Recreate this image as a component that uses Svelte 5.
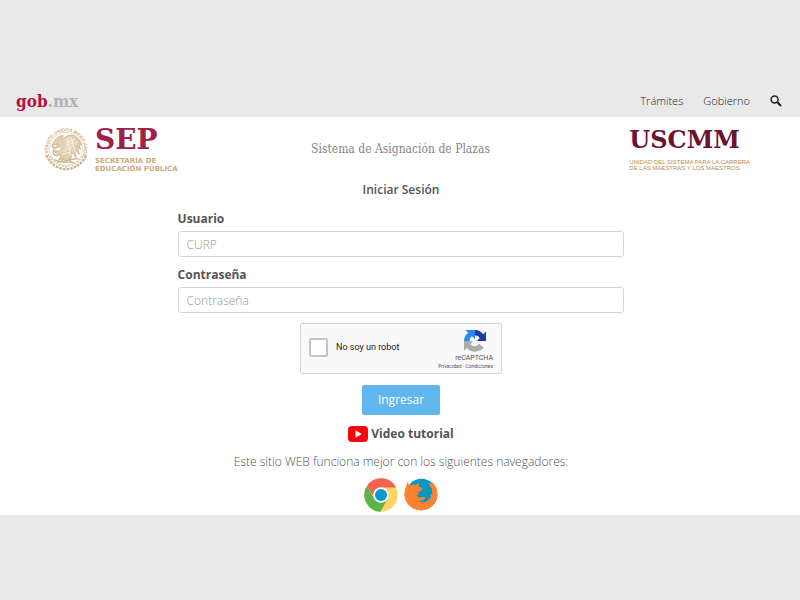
<script>
  let usuario = $state('');
  let contrasena = $state('');
  let humano = $state(false);
</script>

<div class="page">
  <header class="topbar">
    <a class="gob" href="#inicio"><b>gob</b><span>.mx</span></a>
    <nav>
      <a href="#tramites">Trámites</a>
      <a href="#gobierno">Gobierno</a>
      <a class="search" href="#buscar" aria-label="Buscar">
        <svg width="12" height="12" viewBox="0 0 12 12" fill="none" stroke="#222">
          <circle cx="4.6" cy="4.5" r="3.5" stroke-width="1.5" />
          <path d="M7.2 7.1 11 10.9" stroke-width="2.1" />
        </svg>
      </a>
    </nav>
  </header>

  <main>
    <div class="masthead">
      <div class="sep">
        <svg class="seal" width="46" height="46" viewBox="0 0 100 100" fill="none" stroke="#d2b48b">
          <defs><path id="rim" d="M13 63A39 39 0 1 1 87 63" /></defs>
          <text class="rimtext"><textPath href="#rim" startOffset="50%" text-anchor="middle">ESTADOS UNIDOS MEXICANOS</textPath></text>
          <circle cx="50" cy="50" r="36" stroke="#e8d9c3" stroke-width="2" />
          <path d="M7 64Q20 91 49 94Q80 92 94 64" stroke-width="5" stroke-dasharray="6 2" />
          <path d="M14 65Q26 85 49 88Q74 86 87 65" stroke="#e0cbac" stroke-width="4" stroke-dasharray="4 3" />
          <path d="M19 42Q31 19 45 21L38 28 47 26Q57 16 69 22Q80 28 84 42L78 38 82 52 74 44 79 62 69 50 72 69 62 56 61 72Q53 79 43 71L33 75 39 64Q28 62 24 54L36 55Q43 49 38 44L26 49 33 39Z" fill="#e4d0b2" stroke="#d2b48b" stroke-width="2" />
          <path d="M48 32 63 25M48 37 69 29M48 42 74 35M47 49 65 42M44 55 62 49M43 61 60 57M53 27 61 64M62 25 70 59" stroke="#f9f3e9" stroke-width="2" />
          <path d="M19 46Q27 42 23 53T33 65M24 73Q38 80 50 76T77 71M31 78 68 79M44 70 40 79M57 69 61 78" stroke-width="3" />
        </svg>
        <div class="wordmark">
          <strong>SEP</strong>
          <span>SECRETARÍA DE<br />EDUCACIÓN PÚBLICA</span>
        </div>
      </div>
      <h1>Sistema de Asignación de Plazas</h1>
      <div class="uscmm">
        <strong>USCMM</strong>
        <span>UNIDAD DEL SISTEMA PARA LA CARRERA<br />DE LAS MAESTRAS Y LOS MAESTROS</span>
      </div>
    </div>

    <form onsubmit={(e) => e.preventDefault()}>
      <h2>Iniciar Sesión</h2>
      <label class="field" for="usuario">Usuario</label>
      <input class="box" id="usuario" type="text" placeholder="CURP" bind:value={usuario} />
      <label class="field" for="contrasena">Contraseña</label>
      <input class="box" id="contrasena" type="password" placeholder="Contraseña" bind:value={contrasena} />

      <div class="captcha">
        <label class="check"><input type="checkbox" bind:checked={humano} />No soy un robot</label>
        <div class="badge">
          <svg width="22" height="22" viewBox="0 0 64 64">
            <path fill="#1c3aa9" d="M64 32V4l-8 8A32 32 0 0 0 32 0v16a16 16 0 0 1 14 7l-9 9z" />
            <path fill="#2b87f5" d="M32 0H4l8 8A32 32 0 0 0 0 32h16a16 16 0 0 1 7-14l9 9z" />
            <path fill="#ababab" d="M0 32v28l8-8a32 32 0 0 0 49-1L44 40a16 16 0 0 1-26 1l9-9z" />
          </svg>
          <span class="name">reCAPTCHA</span>
          <span class="terms"><a href="#privacidad">Privacidad</a> - <a href="#condiciones">Condiciones</a></span>
        </div>
      </div>

      <button type="submit">Ingresar</button>
    </form>

    <a class="video" href="#video">
      <svg width="20" height="16" viewBox="0 0 20 16">
        <rect width="20" height="16" rx="4" fill="#f80610" />
        <path d="M7.5 4.3v7.4L13.8 8z" fill="#fff" />
      </svg>
      Video tutorial
    </a>
    <p>Este sitio WEB funciona mejor con los siguientes navegadores:</p>
    <div class="browsers">
      <a href="#chrome" aria-label="Chrome">
        <svg width="34" height="34" viewBox="0 0 34 34">
          <circle cx="17" cy="17" r="16.7" fill="#ffd464" />
          <path d="M3 8A16.7 16.7 0 0 1 32 9.500H17A7.500 7.500 0 0 0 9.500 18Z" fill="#f5624f" />
          <path d="M3 8A16.700 16.700 0 0 0 16.500 33.700L23.500 21 17 24.500Q12 24 9.800 20Z" fill="#5ab44a" />
          <circle cx="17" cy="17" r="7.7" fill="#fff" />
          <circle cx="17" cy="17" r="6" fill="#0698cf" />
        </svg>
      </a>
      <a href="#firefox" aria-label="Firefox">
        <svg width="34" height="34" viewBox="0 0 34 34">
          <circle cx="17.500" cy="16.500" r="15.700" fill="#0797c1" />
          <path d="M3.500 4 5.500 7.500Q9 6.200 12 6.700L15 4.700 14.500 8.500 18.500 10.300 18 12.300 14 14.300 15.500 16.500 12.500 16.800Q13 20 17 19.500L20 18.700 21.500 20 19 22.500 14.500 22.700Q19 26.500 24 22.500L25 20.500 27 20 26.500 17.500 28.300 15.500 28 11 25.500 7.700 25 4.500 28 6 28 3.800Q33.600 9.500 33.600 17A16.700 16.700 0 0 1 .3 17L.8 12 2 8.500Z" fill="#ff8230" />
        </svg>
      </a>
    </div>
  </main>
</div>

<style>
  :global(body) {
    margin: 0;
    background: #e9e9e9;
  }
  .page {
    padding: 85px 0;
    font-family: 'Open Sans', 'Noto Sans', sans-serif;
    font-size: 12px;
    line-height: 16px;
    color: #545454;
  }
  a {
    color: inherit;
    text-decoration: none;
  }
  svg {
    display: block;
  }
  .topbar {
    display: flex;
    align-items: center;
    justify-content: space-between;
    height: 32px;
    padding: 0 18px 0 16px;
  }
  .gob {
    font: bold 17px/20px 'DejaVu Serif Condensed', 'DejaVu Serif', serif;
    color: #b3b3b3;
  }
  .gob b {
    color: #b80f3d;
  }
  nav {
    display: flex;
    align-items: center;
    gap: 20px;
    font-size: 11px;
    font-weight: 300;
    color: #222;
  }
  main {
    display: flex;
    flex-direction: column;
    align-items: center;
    background: #fff;
    padding: 0 0 3px 2px;
  }
  .masthead {
    display: grid;
    grid-template-columns: 1fr auto 1fr;
    align-items: center;
    box-sizing: border-box;
    width: 100%;
    height: 64px;
    padding: 0 50px 0 41px;
  }
  .sep {
    display: flex;
    align-items: center;
    gap: 6px;
  }
  .rimtext {
    font: bold 10px 'Liberation Sans', sans-serif;
    fill: #cdac7e;
    stroke: none;
  }
  .wordmark,
  .uscmm {
    display: flex;
    flex-direction: column;
    white-space: nowrap;
  }
  .wordmark strong {
    margin-bottom: 2px;
    font: bold 28px/30px 'DejaVu Serif', serif;
    color: #9d2148;
  }
  .wordmark span {
    font: bold 7px/8px 'DejaVu Sans', sans-serif;
    color: #cdab80;
  }
  .uscmm {
    justify-self: end;
  }
  .uscmm strong {
    margin-bottom: 6px;
    font: bold 24px/26px 'DejaVu Serif', serif;
    color: #6d1232;
  }
  .uscmm span {
    font: 6px/6px 'Liberation Sans', sans-serif;
    color: #b98d4c;
  }
  h1 {
    margin: 0;
    padding-left: 8px;
    font: 12px/16px 'DejaVu Serif Condensed', 'DejaVu Serif', serif;
    color: #858585;
  }
  form {
    display: flex;
    flex-direction: column;
    align-items: center;
    width: 56%;
  }
  h2 {
    margin: 0 0 12px;
    font-size: 12px;
    line-height: 18px;
    font-weight: 600;
  }
  .field {
    align-self: flex-start;
    margin-bottom: 4px;
    font-weight: 700;
  }
  .box {
    box-sizing: border-box;
    width: 100%;
    height: 26px;
    margin-bottom: 10px;
    padding: 0 8px;
    border: 1px solid #d4d4d4;
    border-radius: 3px;
    background: #fff;
    font: 300 12px/16px 'Open Sans', 'Noto Sans', sans-serif;
    color: #545454;
  }
  .box::placeholder {
    color: #999;
    opacity: 1;
  }
  .captcha {
    display: flex;
    justify-content: space-between;
    align-items: center;
    box-sizing: border-box;
    width: 202px;
    height: 51px;
    margin-bottom: 11px;
    padding: 0 8px;
    border: 1px solid #d6d6d6;
    border-radius: 2px;
    background: #f9f9f9;
    font-family: Roboto, sans-serif;
  }
  .check {
    display: flex;
    align-items: center;
    gap: 8px;
    padding-bottom: 3px;
    font-size: 9px;
    color: #222;
  }
  .check input {
    appearance: none;
    box-sizing: border-box;
    width: 19px;
    height: 19px;
    margin: 0;
    border: 2px solid #c4c4c4;
    border-radius: 2px;
    background: #fff;
  }
  .check input:checked {
    background: #61b6ec;
  }
  .badge {
    display: flex;
    flex-direction: column;
    align-items: flex-end;
    padding-top: 2px;
    color: #555;
  }
  .badge svg {
    margin: 0 7px 2px 0;
  }
  .name {
    font-size: 7px;
    line-height: 8px;
  }
  .terms {
    font-size: 5px;
    line-height: 8px;
  }
  button {
    height: 30px;
    margin-bottom: 11px;
    padding: 0 16px;
    border: 0;
    border-radius: 2px;
    background: #61b6ec;
    color: #fff;
    font: 12px/16px 'Open Sans', 'Noto Sans', sans-serif;
  }
  .video {
    display: flex;
    align-items: center;
    gap: 3px;
    font-weight: 700;
  }
  p {
    margin: 12px 0 8px;
    font-weight: 300;
  }
  .browsers {
    display: flex;
    gap: 6px;
  }
</style>
